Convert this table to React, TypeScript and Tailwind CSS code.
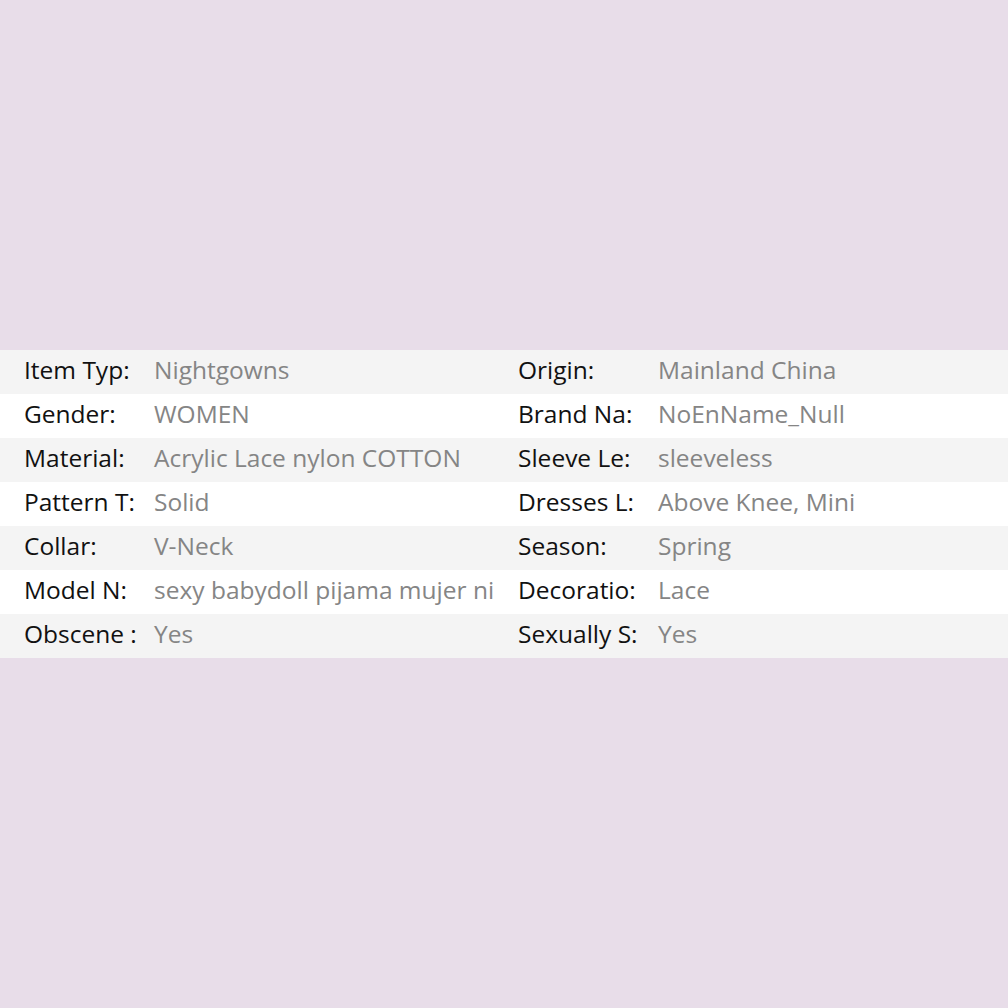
const rows: [string, string, string, string][] = [
  ["Item Typ:", "Nightgowns", "Origin:", "Mainland China"],
  ["Gender:", "WOMEN", "Brand Na:", "NoEnName_Null"],
  ["Material:", "Acrylic Lace nylon COTTON", "Sleeve Le:", "sleeveless"],
  ["Pattern T:", "Solid", "Dresses L:", "Above Knee, Mini"],
  ["Collar:", "V-Neck", "Season:", "Spring"],
  ["Model N:", "sexy babydoll pijama mujer ni", "Decoratio:", "Lace"],
  ["Obscene :", "Yes", "Sexually S:", "Yes"],
];

export default function App() {
  return (
    <div
      className="w-[1008px] h-[1008px] bg-[#e8dde9] flex flex-col justify-center"
      style={{ fontFamily: '"Open Sans", "Noto Sans", sans-serif' }}
    >
      <div className="flex flex-col">
        {rows.map((r, i) => (
          <div
            key={i}
            className={`flex h-[44px] items-center pb-[4px] text-[24.5px] leading-[30px] whitespace-nowrap ${
              i % 2 === 0 ? "bg-[#f4f4f4]" : "bg-white"
            }`}
          >
            <div className="w-[154px] shrink-0 pl-[24px] text-[#111]">{r[0]}</div>
            <div className="w-[340px] shrink-0 text-[#858585]">{r[1]}</div>
            <div className="w-[164px] shrink-0 pl-[24px] text-[#111]">{r[2]}</div>
            <div className="flex-1 text-[#858585]">{r[3]}</div>
          </div>
        ))}
      </div>
    </div>
  );
}
